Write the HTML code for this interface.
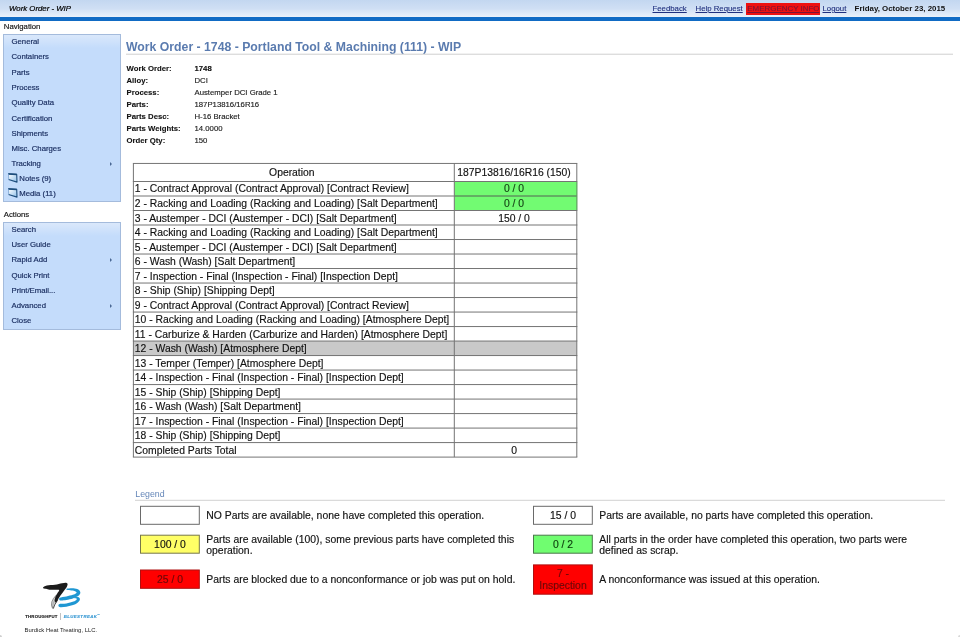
<!DOCTYPE html>
<html><head><meta charset="utf-8"><title>Work Order - WIP</title>
<style>
*{box-sizing:border-box}
html,body{margin:0;padding:0;background:#fff}
#wrap{position:absolute;left:0;top:0;width:960px;height:637px;will-change:transform}
body{width:960px;height:637px;position:relative;overflow:hidden;font-family:"Liberation Sans",Arial,Helvetica,sans-serif;color:#111}
.abs{position:absolute;white-space:nowrap}
svg{position:absolute;left:0;top:0;overflow:visible}
#topbar{left:0;top:0;width:960px;height:17px;background:linear-gradient(#c3d7f0 0%,#cfdff4 50%,#eaf1fa 100%)}
#blueline{left:0;top:16.6px;width:960px;height:4.4px;background:#116bc4}
#wtitle{left:9px;top:4px;font-size:7.8px;font-style:italic;color:#000;line-height:10px;-webkit-text-stroke:0.2px}
.tl{top:4px;font-size:7.8px;line-height:9px;color:#20307f;text-decoration:underline;-webkit-text-stroke:0.12px}
.side{left:3px;width:118px;background:linear-gradient(#dae8fb 0px,#c4dcfb 13px);border:1px solid #a4bbdc}
.side div{position:absolute;left:7.5px;font-size:7.75px;line-height:10px;color:#172b5e;white-space:nowrap;-webkit-text-stroke:0.18px #172b5e}
.hd{font-size:7.75px;line-height:10px;color:#111;left:3.8px;-webkit-text-stroke:0.15px}
.arrow{position:absolute;width:0;height:0;border-left:2.6px solid #4a6894;border-top:2.1px solid transparent;border-bottom:2.1px solid transparent}
#title{left:126px;top:40px;font-size:12.25px;font-weight:bold;color:#5a7baf;line-height:15px}
.lab{left:126.5px;font-size:7.75px;font-weight:bold;line-height:10px;color:#111;-webkit-text-stroke:0.1px}
.val{left:194.5px;font-size:7.75px;line-height:10px;color:#222;-webkit-text-stroke:0.15px}
.t{font-size:10.37px;line-height:13px;color:#111;-webkit-text-stroke:0.15px}
.tc{font-size:10.37px;line-height:13px;color:#111;text-align:center;-webkit-text-stroke:0.15px}
.lg{font-size:10.4px;line-height:12px;color:#111;-webkit-text-stroke:0.15px}
.bx{font-size:10.4px;line-height:12px;text-align:center;width:60px;color:#111;-webkit-text-stroke:0.15px}
</style></head><body>
<div id="wrap">
<div class="abs" id="topbar"></div>
<div class="abs" id="blueline"></div>
<div class="abs" id="wtitle">Work Order - WIP</div>
<div class="abs tl" style="left:652.5px">Feedback</div>
<div class="abs tl" style="left:695.5px">Help Request</div>
<div class="abs" style="left:746px;top:2.5px;width:74px;height:12.4px;background:#ee1111"></div>
<div class="abs tl" style="left:747.3px;color:#7c1535;font-size:7.95px">EMERGENCY INFO</div>
<div class="abs tl" style="left:822.5px">Logout</div>
<div class="abs" style="left:854.6px;top:4px;font-size:7.9px;line-height:9px;font-weight:bold;color:#111">Friday, October 23, 2015</div>
<div class="abs hd" style="top:22px">Navigation</div>
<div class="abs side" id="nav" style="top:33.5px;height:168.4px">
<div style="top:2.80px">General</div>
<div style="top:17.97px">Containers</div>
<div style="top:33.14px">Parts</div>
<div style="top:48.31px">Process</div>
<div style="top:63.48px">Quality Data</div>
<div style="top:79.00px">Certification</div>
<div style="top:94.17px">Shipments</div>
<div style="top:109.34px">Misc. Charges</div>
<div style="top:124.16px">Tracking</div>
<span class="arrow" style="left:105.8px;top:127.06px"></span>
<div style="top:139.33px;left:15.3px">Notes (9)</div>
<svg style="left:3.6px;top:138.7px" width="11" height="11" viewBox="0 0 11 11"><defs><linearGradient id="fg9" x1="0" y1="0" x2="1" y2="1"><stop offset="0" stop-color="#ffffff"/><stop offset="1" stop-color="#8fc0ea"/></linearGradient></defs><path d="M0.6 0.9 L8.6 1.4 L8.9 9 L0.8 6.6 Z" fill="url(#fg9)"/><path d="M0.3 0.8 L8.7 1.3 L9.0 9.1 L0.6 6.5" fill="none" stroke="#1d4d7c" stroke-width="1.1" stroke-linejoin="round"/><path d="M0.3 1.0 L8.7 1.5" stroke="#1d4d7c" stroke-width="1.5"/><path d="M0.5 1 L0.7 6.4" stroke="#6f9ac8" stroke-width="0.7"/></svg>
<div style="top:154.50px;left:15.3px">Media (11)</div>
<svg style="left:3.6px;top:153.9px" width="11" height="11" viewBox="0 0 11 11"><defs><linearGradient id="fg10" x1="0" y1="0" x2="1" y2="1"><stop offset="0" stop-color="#ffffff"/><stop offset="1" stop-color="#8fc0ea"/></linearGradient></defs><path d="M0.6 0.9 L8.6 1.4 L8.9 9 L0.8 6.6 Z" fill="url(#fg10)"/><path d="M0.3 0.8 L8.7 1.3 L9.0 9.1 L0.6 6.5" fill="none" stroke="#1d4d7c" stroke-width="1.1" stroke-linejoin="round"/><path d="M0.3 1.0 L8.7 1.5" stroke="#1d4d7c" stroke-width="1.5"/><path d="M0.5 1 L0.7 6.4" stroke="#6f9ac8" stroke-width="0.7"/></svg>
</div>
<div class="abs hd" style="top:209.5px">Actions</div>
<div class="abs side" id="act" style="top:221.5px;height:108.2px">
<div style="top:2.60px">Search</div>
<div style="top:17.75px">User Guide</div>
<div style="top:32.90px">Rapid Add</div>
<span class="arrow" style="left:105.8px;top:35.80px"></span>
<div style="top:48.05px">Quick Print</div>
<div style="top:63.20px">Print/Email...</div>
<div style="top:78.35px">Advanced</div>
<span class="arrow" style="left:105.8px;top:81.25px"></span>
<div style="top:93.50px">Close</div>
</div>
<div class="abs" id="title">Work Order - 1748 - Portland Tool &amp; Machining (111) - WIP</div>
<div class="abs lab" style="top:64.00px">Work Order:</div><div class="abs val" style="top:64.00px;font-weight:bold;color:#111">1748</div>
<div class="abs lab" style="top:76.00px">Alloy:</div><div class="abs val" style="top:76.00px">DCI</div>
<div class="abs lab" style="top:88.00px">Process:</div><div class="abs val" style="top:88.00px">Austemper DCI Grade 1</div>
<div class="abs lab" style="top:100.00px">Parts:</div><div class="abs val" style="top:100.00px">187P13816/16R16</div>
<div class="abs lab" style="top:111.60px">Parts Desc:</div><div class="abs val" style="top:111.60px">H-16 Bracket</div>
<div class="abs lab" style="top:123.60px">Parts Weights:</div><div class="abs val" style="top:123.60px">14.0000</div>
<div class="abs lab" style="top:135.70px">Order Qty:</div><div class="abs val" style="top:135.70px">150</div>
<svg width="960" height="637" viewBox="0 0 960 637">
<rect x="126" y="53.7" width="827" height="1" fill="#cfcfcf"/>
<rect x="454.30" y="181.50" width="122.50" height="14.51" fill="#72fb72"/>
<rect x="454.30" y="196.00" width="122.50" height="14.51" fill="#72fb72"/>
<rect x="133.40" y="341.06" width="443.40" height="14.51" fill="#c9c9c9"/>
<line x1="132.90" y1="163.45" x2="577.30" y2="163.45" stroke="#747474" stroke-width="1"/>
<line x1="132.90" y1="181.50" x2="577.30" y2="181.50" stroke="#747474" stroke-width="1"/>
<line x1="132.90" y1="196.00" x2="577.30" y2="196.00" stroke="#747474" stroke-width="1"/>
<line x1="132.90" y1="210.51" x2="577.30" y2="210.51" stroke="#747474" stroke-width="1"/>
<line x1="132.90" y1="225.01" x2="577.30" y2="225.01" stroke="#747474" stroke-width="1"/>
<line x1="132.90" y1="239.52" x2="577.30" y2="239.52" stroke="#747474" stroke-width="1"/>
<line x1="132.90" y1="254.03" x2="577.30" y2="254.03" stroke="#747474" stroke-width="1"/>
<line x1="132.90" y1="268.53" x2="577.30" y2="268.53" stroke="#747474" stroke-width="1"/>
<line x1="132.90" y1="283.04" x2="577.30" y2="283.04" stroke="#747474" stroke-width="1"/>
<line x1="132.90" y1="297.54" x2="577.30" y2="297.54" stroke="#747474" stroke-width="1"/>
<line x1="132.90" y1="312.05" x2="577.30" y2="312.05" stroke="#747474" stroke-width="1"/>
<line x1="132.90" y1="326.55" x2="577.30" y2="326.55" stroke="#747474" stroke-width="1"/>
<line x1="132.90" y1="341.06" x2="577.30" y2="341.06" stroke="#747474" stroke-width="1"/>
<line x1="132.90" y1="355.56" x2="577.30" y2="355.56" stroke="#747474" stroke-width="1"/>
<line x1="132.90" y1="370.06" x2="577.30" y2="370.06" stroke="#747474" stroke-width="1"/>
<line x1="132.90" y1="384.57" x2="577.30" y2="384.57" stroke="#747474" stroke-width="1"/>
<line x1="132.90" y1="399.08" x2="577.30" y2="399.08" stroke="#747474" stroke-width="1"/>
<line x1="132.90" y1="413.58" x2="577.30" y2="413.58" stroke="#747474" stroke-width="1"/>
<line x1="132.90" y1="428.09" x2="577.30" y2="428.09" stroke="#747474" stroke-width="1"/>
<line x1="132.90" y1="442.59" x2="577.30" y2="442.59" stroke="#747474" stroke-width="1"/>
<line x1="132.90" y1="457.10" x2="577.30" y2="457.10" stroke="#747474" stroke-width="1"/>
<line x1="133.40" y1="163.45" x2="133.40" y2="457.10" stroke="#747474" stroke-width="1"/>
<line x1="454.30" y1="163.45" x2="454.30" y2="457.10" stroke="#747474" stroke-width="1"/>
<line x1="576.80" y1="163.45" x2="576.80" y2="457.10" stroke="#747474" stroke-width="1"/>
<line x1="576.80" y1="182.00" x2="576.80" y2="195.50" stroke="#5fc25f" stroke-width="1"/>
<line x1="576.80" y1="196.50" x2="576.80" y2="210.01" stroke="#5fc25f" stroke-width="1"/>
<line x1="454.80" y1="196.00" x2="576.80" y2="196.00" stroke="#55a655" stroke-width="1"/>
<rect x="135" y="499.8" width="810" height="1" fill="#d2d2d2"/>
<rect x="140.50" y="506.30" width="58.80" height="18.00" fill="#ffffff" stroke="#6a6a6a" stroke-width="1"/>
<rect x="140.50" y="535.20" width="58.80" height="18.00" fill="#ffff66" stroke="#77774a" stroke-width="1"/>
<rect x="140.50" y="570.00" width="58.80" height="18.30" fill="#ff0000" stroke="#b01010" stroke-width="1"/>
<rect x="533.50" y="506.30" width="58.80" height="18.00" fill="#ffffff" stroke="#6a6a6a" stroke-width="1"/>
<rect x="533.50" y="535.20" width="58.80" height="18.00" fill="#70fd70" stroke="#4a774a" stroke-width="1"/>
<rect x="533.50" y="564.90" width="58.80" height="29.30" fill="#ff0000" stroke="#b01010" stroke-width="1"/>
</svg>
<div class="abs tc" style="left:133.4px;top:166.45px;width:316.9px">Operation</div>
<div class="abs tc" style="left:454.3px;top:166.45px;width:119.5px">187P13816/16R16 (150)</div>
<div class="abs t" style="left:134.8px;top:181.90px">1 - Contract Approval (Contract Approval) [Contract Review]</div>
<div class="abs tc" style="left:454.3px;top:181.90px;width:119.5px;color:#133d13">0 / 0</div>
<div class="abs t" style="left:134.8px;top:197.00px">2 - Racking and Loading (Racking and Loading) [Salt Department]</div>
<div class="abs tc" style="left:454.3px;top:197.00px;width:119.5px;color:#133d13">0 / 0</div>
<div class="abs t" style="left:134.8px;top:211.51px">3 - Austemper - DCI (Austemper - DCI) [Salt Department]</div>
<div class="abs tc" style="left:454.3px;top:211.51px;width:119.5px">150 / 0</div>
<div class="abs t" style="left:134.8px;top:226.01px">4 - Racking and Loading (Racking and Loading) [Salt Department]</div>
<div class="abs t" style="left:134.8px;top:240.52px">5 - Austemper - DCI (Austemper - DCI) [Salt Department]</div>
<div class="abs t" style="left:134.8px;top:255.03px">6 - Wash (Wash) [Salt Department]</div>
<div class="abs t" style="left:134.8px;top:269.53px">7 - Inspection - Final (Inspection - Final) [Inspection Dept]</div>
<div class="abs t" style="left:134.8px;top:284.04px">8 - Ship (Ship) [Shipping Dept]</div>
<div class="abs t" style="left:134.8px;top:298.54px">9 - Contract Approval (Contract Approval) [Contract Review]</div>
<div class="abs t" style="left:134.8px;top:313.05px">10 - Racking and Loading (Racking and Loading) [Atmosphere Dept]</div>
<div class="abs t" style="left:134.8px;top:327.55px">11 - Carburize &amp; Harden (Carburize and Harden) [Atmosphere Dept]</div>
<div class="abs t" style="left:134.8px;top:342.06px">12 - Wash (Wash) [Atmosphere Dept]</div>
<div class="abs t" style="left:134.8px;top:356.56px">13 - Temper (Temper) [Atmosphere Dept]</div>
<div class="abs t" style="left:134.8px;top:371.06px">14 - Inspection - Final (Inspection - Final) [Inspection Dept]</div>
<div class="abs t" style="left:134.8px;top:385.57px">15 - Ship (Ship) [Shipping Dept]</div>
<div class="abs t" style="left:134.8px;top:400.08px">16 - Wash (Wash) [Salt Department]</div>
<div class="abs t" style="left:134.8px;top:414.58px">17 - Inspection - Final (Inspection - Final) [Inspection Dept]</div>
<div class="abs t" style="left:134.8px;top:429.09px">18 - Ship (Ship) [Shipping Dept]</div>
<div class="abs t" style="left:134.8px;top:443.59px">Completed Parts Total</div>
<div class="abs tc" style="left:454.3px;top:443.59px;width:119.5px">0</div>
<div class="abs" style="left:135.3px;top:488.6px;font-size:8.8px;line-height:11px;color:#6486b8">Legend</div>
<div class="abs lg" style="left:206.3px;top:510.0px">NO Parts are available, none have completed this operation.</div>
<div class="abs bx" style="left:140.0px;top:539.0px;color:#111">100 / 0</div>
<div class="abs lg" style="left:206.3px;top:534.0px">Parts are available (100), some previous parts have completed this</div>
<div class="abs lg" style="left:206.3px;top:545.0px">operation.</div>
<div class="abs bx" style="left:140.0px;top:574.0px;color:#6c0808">25 / 0</div>
<div class="abs lg" style="left:206.3px;top:574.0px">Parts are blocked due to a nonconformance or job was put on hold.</div>
<div class="abs bx" style="left:533.0px;top:510.0px;color:#111">15 / 0</div>
<div class="abs lg" style="left:599.3px;top:510.0px">Parts are available, no parts have completed this operation.</div>
<div class="abs bx" style="left:533.0px;top:539.0px;color:#0c3c0c">0 / 2</div>
<div class="abs lg" style="left:599.3px;top:534.0px">All parts in the order have completed this operation, two parts were</div>
<div class="abs lg" style="left:599.3px;top:545.0px">defined as scrap.</div>
<div class="abs bx" style="left:533.0px;top:567.6px;color:#6c0808">7 -</div>
<div class="abs bx" style="left:533.0px;top:579.6px;color:#6c0808">Inspection</div>
<div class="abs lg" style="left:599.3px;top:574.0px">A nonconformance was issued at this operation.</div>
<svg width="960" height="637" viewBox="0 0 960 637">
<path d="M42.93 587.64 C43.07 587.08 44.83 585.94 46.83 585.48 C48.84 585.01 52.43 585.20 54.96 584.83 C57.49 584.45 60.15 583.60 62.00 583.25 C63.85 582.91 65.14 582.63 66.06 582.77 C66.98 582.90 67.37 583.46 67.53 584.07 C67.68 584.67 67.54 585.31 66.98 586.40 C66.42 587.48 65.22 589.08 64.17 590.57 C63.11 592.06 61.68 593.86 60.65 595.33 C59.61 596.80 58.69 598.22 57.94 599.40 C57.19 600.57 56.63 601.97 56.15 602.38 C55.67 602.78 55.31 602.28 55.07 601.83 C54.82 601.38 54.60 600.57 54.69 599.67 C54.78 598.76 55.16 597.50 55.61 596.42 C56.06 595.33 56.80 594.23 57.40 593.17 C57.99 592.10 59.59 590.60 59.18 590.02 C58.78 589.45 56.57 589.76 54.96 589.70 C53.35 589.64 51.03 589.79 49.54 589.65 C48.05 589.50 47.12 589.17 46.02 588.83 C44.92 588.50 42.80 588.20 42.93 587.64 Z" fill="#1c1c1c"/><path d="M66.60 588.73 C67.55 588.44 71.43 588.16 73.38 588.29 C75.32 588.43 77.09 588.89 78.25 589.54 C79.41 590.19 80.13 591.30 80.31 592.19 C80.49 593.09 79.95 594.12 79.33 594.90 C78.72 595.68 77.71 596.24 76.62 596.85 C75.54 597.46 74.55 598.06 72.83 598.58 C71.12 599.11 68.45 599.68 66.33 599.99 C64.21 600.30 61.21 600.80 60.10 600.42 C59.00 600.05 58.69 598.38 59.73 597.72 C60.76 597.05 64.15 596.90 66.33 596.42 C68.52 595.93 71.25 595.29 72.83 594.79 C74.41 594.30 75.18 593.82 75.81 593.44 C76.44 593.06 76.67 592.83 76.62 592.52 C76.58 592.20 76.17 591.87 75.54 591.54 C74.91 591.22 74.14 590.82 72.83 590.57 C71.52 590.31 68.73 590.33 67.69 590.02 C66.65 589.72 65.66 589.01 66.60 588.73 Z" fill="#1f97d2"/><path d="M76.62 596.69 C77.48 596.62 78.52 597.05 79.06 597.50 C79.60 597.95 79.99 598.66 79.88 599.40 C79.76 600.14 79.35 601.04 78.36 601.94 C77.37 602.84 75.92 604.02 73.92 604.81 C71.91 605.61 68.73 606.35 66.33 606.71 C63.93 607.07 60.72 607.39 59.51 606.98 C58.30 606.56 57.94 604.79 59.08 604.22 C60.21 603.65 63.95 604.00 66.33 603.57 C68.72 603.13 71.70 602.22 73.38 601.62 C75.05 601.01 75.79 600.40 76.35 599.94 C76.91 599.48 76.82 599.15 76.73 598.85 C76.64 598.56 76.28 598.30 75.81 598.15 C75.34 598.00 73.78 598.18 73.92 597.93 C74.05 597.69 75.77 596.76 76.62 596.69 Z" fill="#1f97d2"/><path d="M55.50 595.88 Q50.19 602.38 52.25 608.12 L53.44 608.33 Q54.42 605.08 57.67 599.67 Z" fill="#1c1c1c" opacity="0.22"/><path d="M56.04 595.33 Q49.00 602.38 52.36 608.12" stroke="#1c1c1c" stroke-width="0.55" fill="none" opacity="0.85" stroke-linecap="round"/><path d="M57.67 599.94 Q54.15 605.08 53.33 608.33" stroke="#1c1c1c" stroke-width="0.80" fill="none" opacity="0.90" stroke-linecap="round"/><path d="M56.85 597.50 Q51.71 603.46 52.90 607.79" stroke="#1c1c1c" stroke-width="0.35" fill="none" opacity="0.55" stroke-linecap="round"/>
<rect x="60.3" y="613" width="0.6" height="7" fill="#999"/>
<circle cx="0" cy="637" r="2" fill="#cfcfcf"/><circle cx="960" cy="637" r="2" fill="#d8d8d8"/>
</svg>
<div class="abs" style="left:25.2px;top:614.2px;font-size:4.3px;line-height:5px;font-weight:bold;letter-spacing:0.22px;color:#222;-webkit-text-stroke:0.15px #222">THROUGHPUT</div>
<div class="abs" style="left:63.8px;top:614.2px;font-size:4.3px;line-height:5px;font-weight:bold;font-style:italic;letter-spacing:0.4px;color:#3a9ad4;-webkit-text-stroke:0.15px #3a9ad4">BLUESTREAK<span style="font-size:2.5px;vertical-align:top;line-height:3px">™</span></div>
<div class="abs" style="left:24.6px;top:626px;font-size:5.92px;line-height:8px;color:#222">Burdick Heat Treating, LLC.</div>
</div></body></html>
